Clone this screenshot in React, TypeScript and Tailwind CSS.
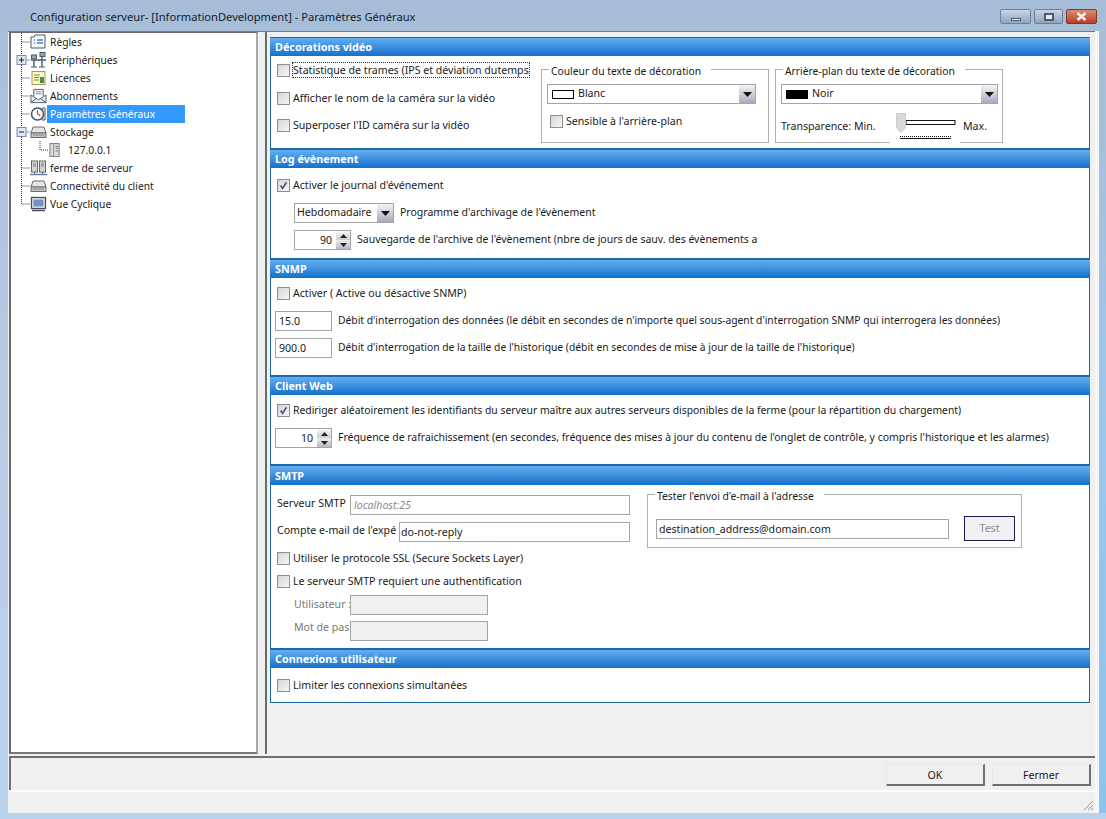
import React from "react";

const font = { fontFamily: '"Noto Sans", "Liberation Sans", Arial, sans-serif' };

function Check({ checked }: { checked?: boolean }) {
  return (
    <span className="w-[13px] h-[13px] shrink-0 border border-[#8e8f8f] bg-gradient-to-br from-[#d4d4d4] to-[#f7f7f7] p-[1px] flex items-center justify-center">
      {checked && (
        <svg width="11" height="11" viewBox="0 0 11 11">
          <path d="M2 5.5 L4.3 9 L9.2 1.5" fill="none" stroke="#44557f" strokeWidth="2" />
        </svg>
      )}
    </span>
  );
}

function CheckRow({ label, className, focus, checked }: { label: string; className?: string; focus?: boolean; checked?: boolean }) {
  return (
    <div className={`flex items-center h-[14px] ${className ?? ""}`}>
      <Check checked={checked} />
      <span className={`ml-[3px] whitespace-nowrap leading-[14px] ${focus ? "outline-1 outline-dotted outline-[#333]" : ""}`}>{label}</span>
    </div>
  );
}

function Section({ title, bodyClass, headClass, children }: { title: string; bodyClass: string; headClass?: string; children: React.ReactNode }) {
  return (
    <section className="w-[820px]">
      <div className={`bg-gradient-to-b from-[#62aef2] to-[#0f70ca] border-t border-[#1468b4] text-white font-bold text-[10.8px] pl-[5px] ${headClass ?? "h-[19px] leading-[17px]"}`}>{title}</div>
      <div className={`bg-white border-x border-b border-[#1a6aa8] ${bodyClass}`}>{children}</div>
    </section>
  );
}

function Arrow() {
  return (
    <span className="w-[16px] self-stretch bg-gradient-to-b from-[#f4f4f8] to-[#a9a9bd] flex items-center justify-center">
      <svg width="9" height="5" viewBox="0 0 9 5"><path d="M0 0H9L4.5 5Z" fill="#111" /></svg>
    </span>
  );
}

function Spinner({ value }: { value: string }) {
  return (
    <div className="h-[20px] w-[57px] border border-[#a5a5a5] bg-white flex">
      <span className="flex-1 text-right pr-[4px] leading-[18px]">{value}</span>
      <span className="w-[14px] flex flex-col">
        <span className="flex-1 bg-gradient-to-b from-[#fafafa] to-[#c9c9d4] flex items-center justify-center">
          <svg width="7" height="4" viewBox="0 0 7 4"><path d="M0 4H7L3.5 0Z" fill="#222" /></svg>
        </span>
        <span className="flex-1 bg-gradient-to-b from-[#f0f0f0] to-[#b6b6c6] flex items-center justify-center">
          <svg width="7" height="4" viewBox="0 0 7 4"><path d="M0 0H7L3.5 4Z" fill="#222" /></svg>
        </span>
      </span>
    </div>
  );
}

function Field({ value, className }: { value: string; className: string }) {
  return <div className={`h-[20px] border border-[#a5a5a5] bg-white leading-[18px] whitespace-nowrap ${className}`}>{value}</div>;
}

function Group({ title, className, children }: { title: string; className: string; children: React.ReactNode }) {
  return (
    <fieldset className={`border border-[#b0b0b0] shrink-0 ${className}`}>
      <legend className="ml-[7px] px-[2px] pr-[10px] pt-[4px] leading-[14px] whitespace-nowrap text-[10.3px]">{title}</legend>
      {children}
    </fieldset>
  );
}

const ico = "#4a5a70";
const icons: Record<string, React.ReactNode> = {
  rules: (
    <svg width="17" height="16" viewBox="0 0 17 16">
      <path d="M1 3h3l1-2h10v13H1z" fill="#f4f7fb" stroke={ico} />
      <path d="M4 6h1M7 6h6M4 9h1M7 9h6" stroke="#4a7fc0" strokeWidth="1.4" />
    </svg>
  ),
  devices: (
    <svg width="17" height="16" viewBox="0 0 17 16">
      <path d="M1 8h15M4 8v7M12 4v11" stroke={ico} strokeWidth="1.4" />
      <rect x="1.5" y="3" width="5" height="4" fill="#9aa5a5" stroke={ico} />
      <rect x="10" y="0.5" width="5" height="4" fill="#9aa5a5" stroke={ico} />
      <path d="M1 15h6M9 15h6" stroke={ico} />
    </svg>
  ),
  licence: (
    <svg width="17" height="16" viewBox="0 0 17 16">
      <rect x="2" y="1.5" width="13" height="13" fill="#fbf6c8" stroke="#a99a54" />
      <path d="M4 5h6M4 7.5h5M4 10h5" stroke="#8a8450" />
      <path d="M10 7h4v6h-4z" fill="#3a9a3a" />
    </svg>
  ),
  mail: (
    <svg width="18" height="16" viewBox="0 0 18 16">
      <path d="M4 8V1h10v7" fill="#f3f4f6" stroke={ico} />
      <path d="M6 3.5h6M6 5.5h6" stroke="#8a97aa" />
      <path d="M1 7l8 5 8-5v8H1z" fill="#e8ebef" stroke={ico} />
      <path d="M1 15l6-4.5M17 15l-6-4.5" stroke={ico} />
    </svg>
  ),
  clock: (
    <svg width="17" height="16" viewBox="0 0 17 16">
      <path d="M12 2h3v12h-3z" fill="#dfe6ee" stroke={ico} />
      <circle cx="7.5" cy="8" r="6" fill="#fdfdfd" stroke="#3d5572" strokeWidth="1.5" />
      <path d="M7.5 4v4l3 2" fill="none" stroke="#c9502e" strokeWidth="1.2" />
    </svg>
  ),
  drive: (
    <svg width="17" height="16" viewBox="0 0 17 16">
      <path d="M3 3h11l2 6H1z" fill="#e5e5e5" stroke="#6f6f6f" />
      <rect x="1" y="9" width="15" height="4.5" fill="#c6c6c6" stroke="#6f6f6f" />
      <path d="M3 11h11" stroke="#8a8a8a" />
    </svg>
  ),
  server: (
    <svg width="12" height="16" viewBox="0 0 12 16">
      <rect x="1" y="1" width="10" height="14" fill="#dcdcdc" stroke="#707070" />
      <path d="M5 1v14" stroke="#8a8a8a" />
      <path d="M7 4h3M7 6h3M7 9h3" stroke="#777" />
    </svg>
  ),
  farm: (
    <svg width="17" height="17" viewBox="0 0 17 17">
      <rect x="1.5" y="1" width="6" height="11" fill="#d3d6d3" stroke="#5f6a5f" />
      <rect x="9.5" y="1" width="6" height="11" fill="#d3d6d3" stroke="#5f6a5f" />
      <path d="M3 4h3M3 6h3M11 4h3M11 6h3" stroke="#6d786d" />
      <path d="M0 14.5h17" stroke="#6a7fa8" strokeWidth="1.5" />
      <path d="M4.5 12v2M12.5 12v2" stroke="#5f6a5f" />
    </svg>
  ),
  screen: (
    <svg width="17" height="16" viewBox="0 0 17 16">
      <rect x="1.5" y="1.5" width="14" height="11" fill="#e8e8ee" stroke="#4a4a5a" strokeWidth="1.3" />
      <rect x="3.5" y="3.5" width="10" height="7" fill="#6f93c6" />
      <path d="M2 14.5h13" stroke="#4a4a5a" strokeWidth="1.5" />
    </svg>
  ),
};

function Connector({ kind }: { kind: "plus" | "minus" | "line" | "last" }) {
  return (
    <svg width="19" height="18" viewBox="0 0 19 18" className="shrink-0">
      <path d={kind === "last" ? "M10.5 0V9H19" : "M10.5 0V18M10.5 9H19"} stroke="#333" strokeDasharray="1 1" fill="none" />
      {(kind === "plus" || kind === "minus") && (
        <g>
          <rect x="6" y="4.5" width="9" height="9" fill="#dfe7f3" stroke="#7c8ba5" />
          <path d="M8 9h5" stroke="#223" />
          {kind === "plus" && <path d="M10.5 6.5v5" stroke="#223" />}
        </g>
      )}
    </svg>
  );
}

function TreeRow({ icon, label, kind, selected }: { icon: string; label: string; kind: "plus" | "minus" | "line" | "last"; selected?: boolean }) {
  return (
    <div className="flex items-center h-[18px]">
      <Connector kind={kind} />
      <span className="w-[17px] h-[16px] flex items-center justify-center shrink-0">{icons[icon]}</span>
      {selected ? (
        <span className="w-[138px] h-[18px] bg-[#3399ff] text-white pl-[3px] leading-[18px]">{label}</span>
      ) : (
        <span className="ml-[3px] leading-[18px] whitespace-nowrap">{label}</span>
      )}
    </div>
  );
}

function WinBtn({ className, children }: { className: string; children: React.ReactNode }) {
  return <div className={`h-[15px] rounded-[2px] border border-[#6f8095] flex items-center justify-center ${className}`}>{children}</div>;
}

export default function App() {
  return (
    <div style={font} className="w-[1106px] h-[819px] flex flex-col bg-gradient-to-b from-[#a6bdd7] via-[#b8cde4] to-[#b9d2ec] text-[10.6px] text-[#1a1a1a] overflow-hidden">
      {/* title bar */}
      <header className="h-[31px] flex items-start shrink-0">
        <div className="ml-[30px] mt-[9px] text-[11.15px] leading-[16px] text-[#10202f]">Configuration serveur- [InformationDevelopment] - Paramètres Généraux</div>
        <div className="ml-auto mr-[9px] mt-[9px] flex gap-[3px]">
          <WinBtn className="w-[31px] bg-gradient-to-b from-[#c9d6e5] to-[#8ea5be]">
            <span className="w-[10px] h-[3px] mt-[5px] bg-[#e9eef4] border border-[#4c5c70]" />
          </WinBtn>
          <WinBtn className="w-[29px] bg-gradient-to-b from-[#c9d6e5] to-[#8ea5be]">
            <span className="w-[10px] h-[8px] bg-[#e9eef4] border-2 border-[#4c5c70]" />
          </WinBtn>
          <WinBtn className="w-[31px] bg-gradient-to-b from-[#dc8a74] to-[#bb3d22] border-[#7a3a2c]">
            <svg width="11" height="9" viewBox="0 0 11 9"><path d="M1.5 1L9.5 8M9.5 1L1.5 8" stroke="#f4f0ee" strokeWidth="2.6" /></svg>
          </WinBtn>
        </div>
      </header>

      <div className="flex-1 flex min-h-0">
        {/* client area */}
        <div className="ml-[8px] flex-1 flex flex-col bg-[#f0f0f0] min-h-0 min-w-0">
          <div className="flex h-[725px] shrink-0 border-t border-[#7a7a7a]">
            {/* tree */}
            <aside className="ml-[1px] w-[249px] h-[722px] border-l-2 border-r-2 border-t border-b-2 border-[#6a6a6a] border-r-[#a8a8a8] border-b-[#777] bg-white shrink-0 text-[10.25px]">
              <TreeRow icon="rules" label="Règles" kind="line" />
              <TreeRow icon="devices" label="Périphériques" kind="plus" />
              <TreeRow icon="licence" label="Licences" kind="line" />
              <TreeRow icon="mail" label="Abonnements" kind="line" />
              <TreeRow icon="clock" label="Paramètres Généraux" kind="line" selected />
              <TreeRow icon="drive" label="Stockage" kind="minus" />
              <div className="flex items-center h-[18px]">
                <svg width="19" height="18" viewBox="0 0 19 18" className="shrink-0">
                  <path d="M10.5 0V18" stroke="#333" strokeDasharray="1 1" />
                </svg>
                <svg width="19" height="18" viewBox="0 0 19 18" className="shrink-0">
                  <path d="M10 0V9H19" stroke="#333" strokeDasharray="1 1" fill="none" />
                </svg>
                <span className="w-[11px] flex justify-center shrink-0">{icons.server}</span>
                <span className="ml-[8px] leading-[18px]">127.0.0.1</span>
              </div>
              <TreeRow icon="farm" label="ferme de serveur" kind="line" />
              <TreeRow icon="drive" label="Connectivité du client" kind="line" />
              <TreeRow icon="screen" label="Vue Cyclique" kind="last" />
            </aside>

            {/* splitter */}
            <div className="w-[7px] shrink-0" />

            {/* right pane */}
            <main className="flex-1 h-[722px] border-l-2 border-[#6a6a6a] pl-[3px] pt-[5px] min-w-0">
              <div className="flex flex-col w-[820px]">
                <Section title="Décorations vidéo" bodyClass="h-[93px] flex">
                  <div className="w-[270px] pl-[6px] pt-[7px] shrink-0">
                    <CheckRow label="Statistique de trames (IPS et déviation dutemps" focus />
                    <CheckRow label="Afficher le nom de la caméra sur la vidéo" className="mt-[14px]" />
                    <CheckRow label="Superposer l'ID  caméra sur la vidéo" className="mt-[13px]" />
                  </div>
                  <Group title="Couleur du texte de décoration" className="h-[83px] w-[228px] mt-[4px]">
                    <div className="h-[20px] mt-[6px] ml-[5px] w-[209px] border border-[#a5a5a5] bg-white flex items-center">
                      <span className="ml-[4px] w-[22px] h-[9px] border border-black" />
                      <span className="ml-[4px] flex-1">Blanc</span>
                      <Arrow />
                    </div>
                    <CheckRow label="Sensible à l'arrière-plan" className="mt-[10px] ml-[8px]" />
                  </Group>
                  <Group title="Arrière-plan du texte de décoration" className="h-[83px] w-[228px] mt-[4px] ml-[6px]">
                    <div className="h-[20px] mt-[6px] ml-[5px] w-[217px] border border-[#a5a5a5] bg-white flex items-center">
                      <span className="ml-[4px] w-[22px] h-[9px] bg-black" />
                      <span className="ml-[4px] flex-1">Noir</span>
                      <Arrow />
                    </div>
                    <div className="flex items-center mt-[6px] ml-[5px] h-[33px]">
                      <span className="w-[109px] whitespace-nowrap">Transparence: Min.</span>
                      <div className="w-[70px] h-[33px] bg-white shrink-0 pl-[6px] pt-[3px]">
                        <svg width="60" height="27" viewBox="0 0 60 27">
                          <rect x="10" y="7.5" width="49" height="4" fill="#fff" stroke="#111" />
                          <path d="M0.5 0.5h9v14l-4.5 5-4.5-5z" fill="#d8d8d8" stroke="#ccc" />
                          <path d="M4 25.5h51" stroke="#111" />
                          <path d="M4 23.5h51" stroke="#111" strokeDasharray="1 1" />
                        </svg>
                      </div>
                      <span className="ml-[3px]">Max.</span>
                    </div>
                  </Group>
                </Section>

                <Section title="Log évènement" bodyClass="h-[91px]">
                  <div className="pl-[6px] pt-[10px]">
                    <CheckRow label="Activer le journal d'événement" checked />
                  </div>
                  <div className="flex items-center ml-[23px] mt-[11px]">
                    <div className="h-[20px] w-[100px] border border-[#a5a5a5] bg-white flex items-center pl-[2px]">
                      <span className="flex-1">Hebdomadaire</span>
                      <Arrow />
                    </div>
                    <span className="ml-[6px] whitespace-nowrap text-[10.5px]">Programme d'archivage de l'évènement</span>
                  </div>
                  <div className="flex items-center ml-[23px] mt-[7px]">
                    <Spinner value="90" />
                    <span className="ml-[6px] whitespace-nowrap text-[10.5px]">Sauvegarde de l'archive de l'évènement (nbre de jours de sauv. des évènements a</span>
                  </div>
                </Section>

                <Section title="SNMP" bodyClass="h-[98px]">
                  <div className="pl-[6px] pt-[8px]">
                    <CheckRow label="Activer ( Active ou désactive SNMP)" />
                  </div>
                  <div className="flex items-center ml-[4px] mt-[11px]">
                    <Field value="15.0" className="w-[57px] pl-[3px]" />
                    <span className="ml-[6px] whitespace-nowrap text-[10.3px]">Débit d'interrogation des données (le débit en secondes de n'importe quel sous-agent d'interrogation SNMP qui interrogera les données)</span>
                  </div>
                  <div className="flex items-center ml-[4px] mt-[7px]">
                    <Field value="900.0" className="w-[57px] pl-[3px]" />
                    <span className="ml-[6px] whitespace-nowrap text-[10.3px]">Débit d'interrogation de la taille de l'historique (débit en secondes de mise à jour de la taille de l'historique)</span>
                  </div>
                </Section>

                <Section title="Client Web" bodyClass="h-[70px]">
                  <div className="pl-[6px] pt-[8px] text-[10.35px]">
                    <CheckRow label="Rediriger aléatoirement les identifiants du serveur maître aux autres serveurs disponibles de la ferme (pour la répartition du chargement)" checked />
                  </div>
                  <div className="flex items-center ml-[4px] mt-[11px]">
                    <Spinner value="10" />
                    <span className="ml-[6px] whitespace-nowrap text-[10.45px]">Fréquence de rafraichissement (en secondes, fréquence des mises à jour du contenu de l'onglet de contrôle, y compris l'historique et les alarmes)</span>
                  </div>
                </Section>

                <Section title="SMTP" headClass="h-[20px] leading-[19px]" bodyClass="h-[164px] flex">
                  <div className="w-[376px] shrink-0 pl-[6px]">
                    <div className="flex items-center mt-[10px]">
                      <span className="w-[73px] mb-[3px] whitespace-nowrap">Serveur SMTP</span>
                      <Field value="localhost:25" className="w-[280px] pl-[3px] italic text-[#8a8a8a]" />
                    </div>
                    <div className="flex items-center mt-[7px]">
                      <span className="w-[122px] mb-[3px] whitespace-nowrap">Compte e-mail de l'expé</span>
                      <Field value="do-not-reply" className="w-[231px] pl-[1px]" />
                    </div>
                    <CheckRow label="Utiliser le protocole SSL (Secure Sockets Layer)" className="mt-[9px]" />
                    <CheckRow label="Le serveur SMTP requiert une authentification" className="mt-[9px]" />
                    <div className="flex items-center mt-[7px] ml-[17px] text-[#777]">
                      <span className="w-[56px] whitespace-nowrap">Utilisateur :</span>
                      <div className="h-[20px] w-[138px] border border-[#a5a5a5] bg-[#f0f0f0]" />
                    </div>
                    <div className="flex items-center mt-[5px] ml-[17px] text-[#777]">
                      <span className="w-[56px] mb-[6px] whitespace-nowrap">Mot de pas</span>
                      <div className="h-[20px] w-[138px] border border-[#a5a5a5] bg-[#f0f0f0]" />
                    </div>
                  </div>
                  <Group title="Tester l'envoi d'e-mail à l'adresse" className="h-[63px] w-[375px]">
                    <div className="flex items-center mt-[13px] ml-[8px]">
                      <Field value="destination_address@domain.com" className="w-[293px] pl-[2px]" />
                      <div className="ml-[15px] w-[51px] h-[25px] border border-[#1c1c50] bg-[#f1f1f4] text-[#8a8a8a] flex items-center justify-center">Test</div>
                    </div>
                  </Group>
                </Section>

                <Section title="Connexions utilisateur" bodyClass="h-[35px] pl-[6px] pt-[10px]">
                  <CheckRow label="Limiter les connexions simultanées" />
                </Section>
              </div>
            </main>
          </div>

          {/* footer */}
          <footer className="h-[34px] shrink-0 border-t-2 border-l-2 border-[#707070] ml-[1px] flex items-start justify-end gap-[7px] pr-[4px] pt-[6px]">
            <div className="w-[99px] h-[22px] border border-[#e8e8e8] border-r-2 border-b-2 border-r-[#707070] border-b-[#707070] bg-[#f0f0f0] text-center leading-[20px]">OK</div>
            <div className="w-[99px] h-[22px] border border-[#e8e8e8] border-r-2 border-b-2 border-r-[#707070] border-b-[#707070] bg-[#f0f0f0] text-center leading-[20px]">Fermer</div>
          </footer>
          <div className="h-[23px] shrink-0 border-t-2 border-white flex justify-end items-end pr-[1px] pb-[2px]">
            <svg width="12" height="12" viewBox="0 0 12 12"><path d="M11 2L2 11M11 6L6 11M11 9L9 11" stroke="#9a9a9a" /></svg>
          </div>
        </div>
        {/* right window edge */}
        <div className="w-[4px] shrink-0 bg-[#f5f7fa]" />
        <div className="w-[7px] shrink-0 bg-gradient-to-b from-[#a9bed6] via-[#9cc6ea] to-[#8cc4ee]" />
      </div>
      <div className="h-[6px] shrink-0" />
    </div>
  );
}
